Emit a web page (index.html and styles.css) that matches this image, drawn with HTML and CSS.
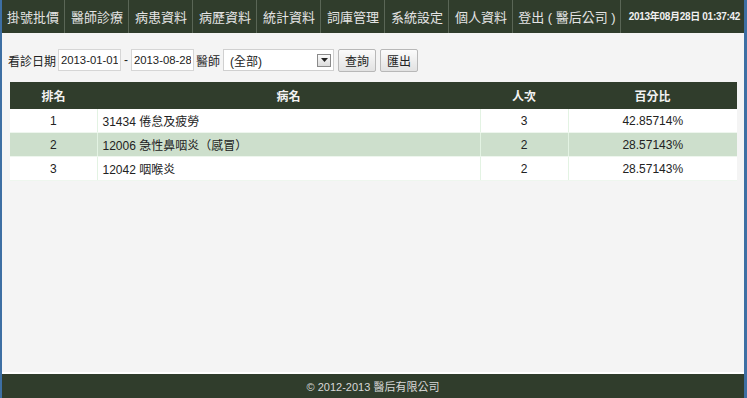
FILE: index.html
```html
<!DOCTYPE html>
<html lang="zh-Hant">
<head>
  <meta charset="UTF-8">
  <title>統計資料</title>
  <link rel="stylesheet" href="styles.css">
</head>
<body>
  <div class="page">
    <div class="nav">
      <a class="nav-item">掛號批價</a>
      <a class="nav-item">醫師診療</a>
      <a class="nav-item">病患資料</a>
      <a class="nav-item">病歷資料</a>
      <a class="nav-item">統計資料</a>
      <a class="nav-item">詞庫管理</a>
      <a class="nav-item">系統設定</a>
      <a class="nav-item">個人資料</a>
      <a class="nav-item logout">登出 ( 醫后公司 )</a>
      <span class="nav-time">2013年08月28日 01:37:42</span>
    </div>
    <div class="main">
      <form class="filter">
        <span class="lbl">看診日期</span>
        <input class="date" type="text" value="2013-01-01">
        <span class="dash">-</span>
        <input class="date" type="text" value="2013-08-28">
        <span class="lbl">醫師</span>
        <div class="select">
          <span>(全部)</span>
          <span class="arrow"><svg width="7" height="4" viewBox="0 0 7 4"><path d="M0 0h7L3.5 4z" fill="#222"/></svg></span>
        </div>
        <button type="button" class="btn">查詢</button>
        <button type="button" class="btn">匯出</button>
      </form>
      <table class="stats">
        <thead>
          <tr><th class="c-rank">排名</th><th class="c-name">病名</th><th class="c-count">人次</th><th class="c-pct">百分比</th></tr>
        </thead>
        <tbody>
          <tr><td class="center">1</td><td>31434 倦怠及疲勞</td><td class="center">3</td><td class="center">42.85714%</td></tr>
          <tr class="alt"><td class="center">2</td><td>12006 急性鼻咽炎（感冒）</td><td class="center">2</td><td class="center">28.57143%</td></tr>
          <tr><td class="center">3</td><td>12042 咽喉炎</td><td class="center">2</td><td class="center">28.57143%</td></tr>
        </tbody>
      </table>
    </div>
    <div class="footer">© 2012-2013 醫后有限公司</div>
  </div>
</body>
</html>
```

FILE: styles.css
```css
:root {
  --green: #303d2c;
  --line: #5a6656;
  --edge: #3d6fa3;
}
html, body {
  margin: 0;
  height: 100%;
}
body {
  font-family: "Liberation Sans", "Noto Sans CJK TC", Arial, sans-serif;
  font-size: 12px;
  color: #222;
  background: #f4f4f4;
  border-left: 2px solid var(--edge);
  border-right: 3px solid var(--edge);
  box-sizing: border-box;
}
.page {
  min-height: 100vh;
  display: flex;
  flex-direction: column;
}
.nav {
  display: flex;
  align-items: stretch;
  height: 33px;
  background: var(--green);
}
.nav-item {
  display: flex;
  align-items: center;
  padding: 0 5px 0 6px;
  color: #e4e4e4;
  font-size: 13px;
  border-right: 1px solid var(--line);
  white-space: nowrap;
}
.nav-item:first-child {
  padding-left: 5px;
}
.nav-item.logout {
  padding: 0 4px 0 5px;
}
.nav-time {
  flex: 1;
  display: flex;
  align-items: center;
  justify-content: flex-end;
  padding: 0 4px 2px 0;
  color: #f0f0f0;
  font-size: 10px;
  letter-spacing: -0.3px;
  font-weight: bold;
  white-space: nowrap;
}
.main {
  flex: 1;
  padding: 16px 8px 0 6px;
}
.filter {
  display: flex;
  align-items: center;
  gap: 2px;
  height: 22px;
  margin-bottom: 11px;
}
.lbl {
  font-size: 12px;
}
.date {
  width: 63px;
  height: 22px;
  box-sizing: border-box;
  border: 1px solid #d6d6d6;
  background: #fff;
  padding: 0 2px;
  font: inherit;
  font-size: 11.3px;
  color: #222;
}
.dash {
  padding: 0 1px;
}
.select {
  width: 111px;
  height: 22px;
  box-sizing: border-box;
  border: 1px solid #d0d0d0;
  background: #fff;
  display: flex;
  align-items: center;
  justify-content: space-between;
  padding: 0 2px 0 6px;
  margin-left: 1px;
}
.arrow {
  width: 12px;
  height: 11px;
  border: 1px solid #8a8a8a;
  background: linear-gradient(#fafafa, #dcdcdc);
  display: flex;
  align-items: center;
  justify-content: center;
}
.btn {
  height: 23px;
  padding: 0 6px;
  border: 1px solid #b8b8b8;
  border-radius: 2px;
  background: linear-gradient(#fbfbfb, #e2e2e2);
  font: inherit;
  font-size: 12px;
  color: #222;
  margin-left: 2px;
}
.stats {
  width: 727px;
  margin-left: 2px;
  border-collapse: collapse;
  background: #fff;
}
.stats th {
  background: var(--green);
  color: #f2f2f2;
  font-weight: bold;
  font-size: 12px;
  height: 27px;
  padding: 0;
}
.stats td {
  height: 23px;
  padding: 0 5px;
  border-right: 1px solid #e3f3e3;
  border-bottom: 1px solid #eef6ee;
}
.stats td:last-child {
  border-right: none;
}
.stats .alt td {
  background: #cddfcc;
}
.center {
  text-align: center;
}
.c-rank { width: 87px; }
.c-count { width: 88px; }
.c-pct { width: 169px; }
.footer {
  height: 24px;
  border-top: 2px solid #fff;
  background: var(--green);
  color: #d8d8d8;
  font-size: 11px;
  display: flex;
  align-items: center;
  justify-content: center;
}
```
